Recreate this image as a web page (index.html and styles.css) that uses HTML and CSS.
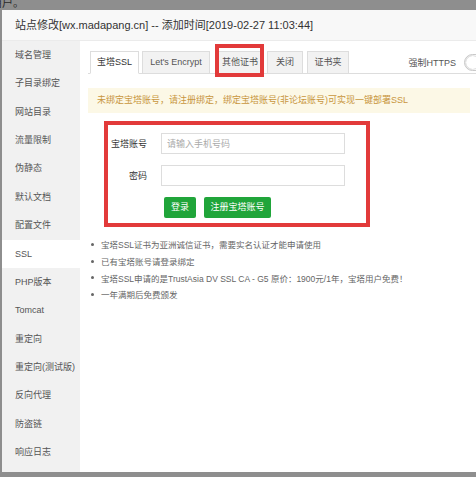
FILE: index.html
```html
<!DOCTYPE html>
<html lang="zh">
<head>
<meta charset="utf-8">
<link rel="stylesheet" href="styles.css">
</head>
<body>
<div class="page">
  <div class="backdrop">用户。</div>
  <div class="dialog">
    <div class="title">站点修改[wx.madapang.cn] -- 添加时间[2019-02-27 11:03:44]</div>
    <div class="body">
      <ul class="side">
        <li>域名管理</li>
        <li>子目录绑定</li>
        <li>网站目录</li>
        <li>流量限制</li>
        <li>伪静态</li>
        <li>默认文档</li>
        <li>配置文件</li>
        <li class="active">SSL</li>
        <li>PHP版本</li>
        <li>Tomcat</li>
        <li>重定向</li>
        <li>重定向(测试版)</li>
        <li>反向代理</li>
        <li>防盗链</li>
        <li>响应日志</li>
      </ul>
      <div class="main">
        <div class="tabbar">
          <div class="tab tab-bt active">宝塔SSL</div>
          <div class="tab tab-le">Let's Encrypt</div>
          <div class="tab tab-other marked">其他证书</div>
          <div class="tab tab-close">关闭</div>
          <div class="tab tab-folder">证书夹</div>
          <div class="force">强制HTTPS <span class="switch"><span class="knob"></span></span></div>
        </div>
        <div class="alert">未绑定宝塔账号，请注册绑定，绑定宝塔账号(非论坛账号)可实现一键部署SSL</div>
        <div class="login-box">
          <div class="row">
            <label class="label">宝塔账号</label>
            <input class="input" type="text" placeholder="请输入手机号码">
          </div>
          <div class="row">
            <label class="label">密码</label>
            <input class="input" type="password">
          </div>
          <div class="row buttons">
            <span class="btn btn-login">登录</span>
            <span class="btn btn-reg">注册宝塔账号</span>
          </div>
        </div>
        <ul class="tips">
          <li>宝塔SSL证书为亚洲诚信证书，需要实名认证才能申请使用</li>
          <li>已有宝塔账号请登录绑定</li>
          <li>宝塔SSL申请的是TrustAsia DV SSL CA - G5 原价：1900元/1年，宝塔用户免费！</li>
          <li>一年满期后免费颁发</li>
        </ul>
      </div>
    </div>
  </div>
</div>
</body>
</html>
```
FILE: styles.css
```css
* { box-sizing: border-box; }
html, body {
  margin: 0;
  padding: 0;
  width: 476px;
  height: 477px;
  overflow: hidden;
  background: #8e8e8e;
}
body {
  font-family: "Liberation Sans", "Noto Sans CJK SC", sans-serif;
  color: #333;
}
.page {
  width: 476px;
  height: 477px;
  display: flex;
  flex-direction: column;
  overflow: hidden;
}
.backdrop {
  height: 10px;
  font-size: 11px;
  line-height: 6px;
  margin-left: -9px;
  color: #2a2a2a;
  overflow: hidden;
}
.dialog {
  margin-left: 2px;
  width: 474px;
  height: 462px;
  background: #fff;
  display: flex;
  flex-direction: column;
  overflow: hidden;
}
.title {
  height: 31px;
  line-height: 31px;
  padding-left: 13px;
  font-size: 11px;
  color: #333;
  background: #f8f8f8;
  border-bottom: 1px solid #ebebeb;
  white-space: nowrap;
}
.body {
  flex: 1;
  display: flex;
}
.side {
  list-style: none;
  margin: 0;
  padding: 0;
  width: 78px;
  background: #f1f1f1;
}
.side li {
  height: 28.36px;
  line-height: 28.36px;
  padding-left: 13px;
  font-size: 9px;
  color: #555;
  white-space: nowrap;
}
.side li.active {
  background: #fff;
}
.main {
  flex: 1;
  padding: 10px 6px 0 8px;
  min-width: 0;
}
.tabbar {
  display: flex;
  align-items: flex-end;
  height: 23px;
  border-bottom: 1px solid #ddd;
  padding-left: 2px;
  margin-right: -6px;
}
.tab {
  position: relative;
  height: 23px;
  line-height: 21px;
  margin-bottom: -1px;
  text-align: center;
  font-size: 9px;
  color: #555;
  background: #f2f2f2;
  border: 1px solid #ddd;
  white-space: nowrap;
}
.tab.active {
  background: #fff;
  border-bottom-color: #fff;
  color: #333;
}
.tab-bt { width: 49px; }
.tab-le { width: 68px; margin-left: 3px; }
.tab-other { width: 46px; margin-left: 7px; }
.tab-close { width: 36px; margin-left: 4px; }
.tab-folder { width: 42px; margin-left: 4px; }
.tab.marked::after {
  content: "";
  position: absolute;
  left: -3px;
  right: -2px;
  top: -8px;
  bottom: -4px;
  border: 4px solid #e23a3a;
}
.force {
  margin-left: auto;
  margin-right: -16px;
  align-self: center;
  display: flex;
  align-items: center;
  font-size: 9px;
  color: #555;
  white-space: nowrap;
}
.switch {
  margin-left: 8px;
  width: 28px;
  height: 17px;
  border: 1px solid #ccc;
  border-radius: 9px;
  background: #fff;
  display: inline-flex;
  align-items: center;
  padding-left: 1px;
}
.knob {
  width: 13px;
  height: 13px;
  border-radius: 50%;
  background: #fff;
  box-shadow: 0 0 2px rgba(0,0,0,0.4);
}
.alert {
  margin-top: 14px;
  height: 25px;
  line-height: 25px;
  padding-left: 9px;
  background: #fcf8e6;
  color: #c8963e;
  font-size: 9px;
  white-space: nowrap;
}
.login-box {
  margin: 8px 0 0 16px;
  width: 266px;
  height: 106px;
  border: 4px solid #e23a3a;
  padding: 8px 0 0 0;
  display: flex;
  flex-direction: column;
  gap: 11px;
}
.row {
  display: flex;
  align-items: center;
  height: 21px;
}
.label {
  width: 39px;
  text-align: right;
  margin-right: 14px;
  font-size: 9px;
  color: #333;
}
.input {
  width: 184px;
  height: 21px;
  border: 1px solid #ddd;
  padding: 0 0 0 5px;
  font-size: 9px;
  font-family: inherit;
  outline: none;
}
.input::placeholder { color: #aaa; }
.buttons {
  padding-left: 56px;
  gap: 8px;
}
.btn {
  height: 21px;
  line-height: 21px;
  background: #20a53a;
  color: #fff;
  font-size: 9px;
  border-radius: 2px;
  text-align: center;
}
.btn-login { width: 32px; }
.btn-reg { width: 67px; }
.tips {
  list-style: none;
  margin: 9px 0 0 0;
  padding: 0;
}
.tips li {
  display: flex;
  align-items: center;
  height: 16.7px;
  font-size: 8.5px;
  color: #666;
  white-space: nowrap;
}
.tips li::before {
  content: "";
  width: 3px;
  height: 3px;
  border-radius: 50%;
  background: #666;
  margin: 0 7px 0 3px;
  flex: none;
}
```
